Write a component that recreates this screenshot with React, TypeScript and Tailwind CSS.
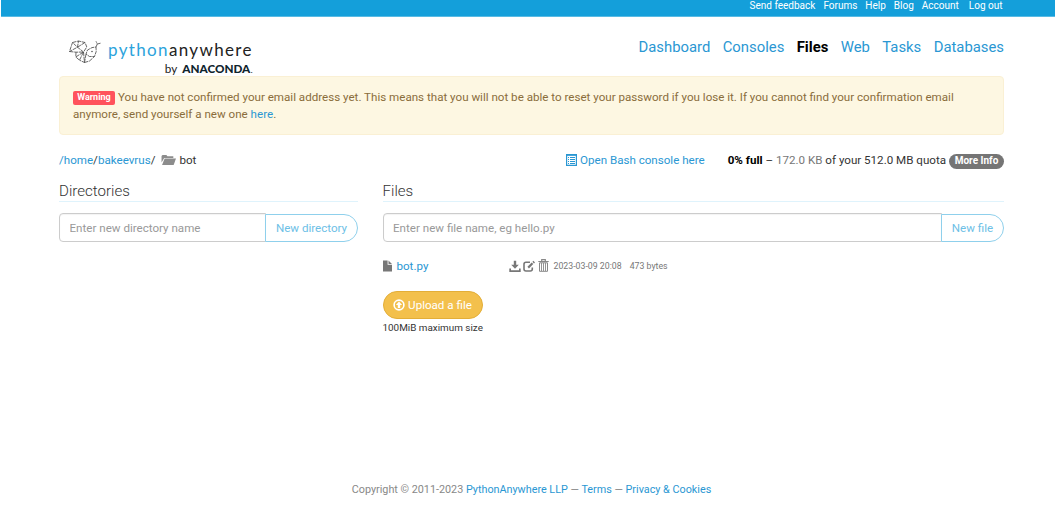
import React from "react";

const LINK = "text-[#2a97d3]";

function SnakeLogo() {
  return (
    <svg className="mt-[9px] h-[26px] w-[34px] shrink-0" viewBox="0 0 34 26" fill="none" stroke="#444" strokeWidth="0.8" strokeLinejoin="round" strokeDasharray="4 0.7">
      <path d="M4.5 3.5L10.5 2L17 3.5L18.8 8L15.5 13L9.5 8.2L4.5 3.5L1.5 12.5L9.5 8.2L10.5 2M9.5 8.2L17 3.5M1.5 12.5L8 13.2L15.5 13M8 13.2L7.8 18L15.5 13L11.5 21.2L7.8 18M15.5 13L16.5 23.5L11.5 21.2" />
      <path d="M16.5 23.5L21.5 22L26.5 17.5L28.2 12.5L28 8L24 8.6L19.5 11L18 15L21.5 17.5L26.5 17.5M18 15L16.5 23.5" />
      <path d="M28 8L29.3 5L28 2.3M29.3 5L32.5 4.2" />
      <circle cx="24" cy="12.5" r="0.7" fill="#333" stroke="none" />
    </svg>
  );
}

function Folder() {
  return (
    <svg className="ml-[6px] mr-[3px] h-[12px] w-[15px]" viewBox="0 0 14 12" preserveAspectRatio="none" fill="#8c8c8c">
      <path d="M0.5 8.5V2L1.4 1H5L6 2.2H11.5V4H3L0.5 8.5Z" />
      <path d="M3.4 4.6H14L11.8 11H1L3.4 4.6Z" />
    </svg>
  );
}

function ListIcon() {
  return (
    <svg className="mr-[3px] mb-px h-[12px] w-[11px]" viewBox="0 0 11 12">
      <path d="M0.6 0.6H10.4V11.4H0.6Z" fill="none" stroke="#2a97d3" strokeWidth="1.2" />
      <path d="M0.5 1.3H10.5M2 3.5H3M4 3.5H9M2 5.5H3M4 5.5H9M2 7.5H3M4 7.5H9M2 9.5H3M4 9.5H9" stroke="#2a97d3" strokeWidth="1" />
    </svg>
  );
}

function FileIcon() {
  return (
    <svg className="mr-[5px] mb-px h-[12px] w-[9px]" viewBox="0 0 9 12" fill="#777">
      <path d="M0 0.5H4.6V4.8H9V11.5H0ZM5.5 0.5L9 4H5.5Z" />
    </svg>
  );
}

function Download() {
  return (
    <svg className="h-[13px] w-[12px]" viewBox="0 0 12 13" fill="#777">
      <path d="M4.8 0.8H7.2V4.8H9.8L6 8.8L2.2 4.8H4.8ZM0.3 8.5H2V10.2H10V8.5H11.7V12H0.3Z" />
    </svg>
  );
}

function Edit() {
  return (
    <svg className="ml-[2px] h-[13px] w-[12px]" viewBox="0 0 12 13" fill="none" stroke="#777" strokeWidth="1.6">
      <path d="M7 2.3H3Q1 2.3 1 4.3V9Q1 11 3 11H7.3Q9.3 11 9.3 9V7.5" />
      <path d="M5.2 7.6L9.5 3.3" strokeWidth="2.2" />
      <path d="M10.2 2.6L11.2 1.6" strokeWidth="2.2" />
    </svg>
  );
}

function Trash() {
  return (
    <svg className="ml-[3px] mb-[2px] h-[13px] w-[11px]" viewBox="0 0 11 13" fill="none" stroke="#888">
      <path d="M0.3 2.5H10.7M3.7 2V0.7H7.3V2" strokeWidth="1.2" />
      <path d="M1.5 3.8V12.3H9.5V3.8Z" strokeWidth="1" />
      <path d="M3.5 4V12M5.5 4V12M7.5 4V12" strokeWidth="0.9" />
    </svg>
  );
}

function UploadIcon() {
  return (
    <svg className="mr-[3px] mb-px h-[12px] w-[12px]" viewBox="0 0 12 12" fill="none" stroke="#fff">
      <circle cx="6" cy="6" r="4.9" strokeWidth="1.6" />
      <path d="M6 2.4L9.1 6H7.2V9H4.8V6H2.9Z" fill="#fff" stroke="none" />
    </svg>
  );
}

function CreateForm({ placeholder, action, width }: { placeholder: string; action: string; width: string }) {
  return (
    <div className="mt-[11px] flex h-[29px] text-[11.6px]">
      <input placeholder={placeholder} className="h-[29px] min-w-0 flex-1 rounded-l-[4px] border border-[#ccc] bg-white px-[9.5px] text-[#555] shadow-[inset_0_1px_1px_rgba(0,0,0,0.05)] outline-none placeholder:text-[#999]" />
      <button className={`-ml-px mt-px h-[28px] shrink-0 rounded-r-full border border-[#8fd0ec] bg-white text-[#6dc0e6] ${width}`}>{action}</button>
    </div>
  );
}

export default function App() {
  return (
    <div className="flex h-[507px] w-[1056px] flex-col overflow-hidden bg-white text-[11.6px] leading-[16.5px] text-[#333]" style={{ fontFamily: "Roboto, sans-serif" }}>
      <div className="mr-px ml-px flex h-[17px] shrink-0 justify-end border-b border-[#58bbe4] bg-[#149fda] pr-[52.5px] text-[10px] leading-[11px] text-white">
        <span className="mr-[8px]">Send feedback</span>
        <span className="mr-[8px]">Forums</span>
        <span className="mr-[8px]">Help</span>
        <span className="mr-[8px]">Blog</span>
        <span className="mr-[10px]">Account</span>
        <span>Log out</span>
      </div>

      <div className="ml-[59px] flex w-[945px] flex-1 flex-col">
        <header className="flex h-[59px] shrink-0 justify-between">
          <div className="flex pt-[13px] pl-[9px]">
            <SnakeLogo />
            <div className="ml-[6px] flex w-[146px] flex-col pt-[8px]" style={{ fontFamily: "Lato, sans-serif" }}>
              <div className="h-[25px] whitespace-nowrap text-[17px] leading-[23px] tracking-[1.35px] text-[#222]">
                <span className="text-[#2ba3dc]">python</span>anywhere
              </div>
              <div className="flex items-baseline justify-end gap-[5px] pr-px text-[11.7px] leading-[15px] whitespace-nowrap text-[#222]">
                <span>by</span>
                <span className="font-black text-[#10242e]">ANACONDA<span className="font-light">.</span></span>
              </div>
            </div>
          </div>
          <nav className={`flex gap-[12.4px] pt-[20px] text-[14.85px] leading-[20px] ${LINK}`}>
            <span>Dashboard</span>
            <span>Consoles</span>
            <span className="font-bold text-black">Files</span>
            <span>Web</span>
            <span>Tasks</span>
            <span>Databases</span>
          </nav>
        </header>

        <div className="h-[59px] shrink-0 rounded-[4px] border border-[#faf0d4] bg-[#fdf7e2] px-[13px] pt-[12px] whitespace-nowrap text-[#8a6d3b]">
          <div className="flex h-[17px] items-center">
            <span className="mr-[3px] flex h-[14px] w-[42px] items-center justify-center rounded-[2px] bg-[#ff525c] text-[9px] font-bold text-white">Warning</span>
            You have not confirmed your email address yet. This means that you will not be able to reset your password if you lose it. If you cannot find your confirmation email
          </div>
          <div>anymore, send yourself a new one <span className={LINK}>here</span>.</div>
        </div>

        <div className="mt-[17px] flex h-[16px] shrink-0 items-center whitespace-nowrap">
          <span className={LINK}>/home</span>/<span className={LINK}>bakeevrus</span>/
          <Folder />
          <span>bot</span>
          <div className={`ml-auto flex items-center ${LINK}`}><ListIcon />Open Bash console here</div>
          <div className="ml-[23px]"><b className="text-black">0% full</b> – <span className="text-[#777]">172.0 KB</span> of your 512.0 MB quota</div>
          <span className="mt-[2px] ml-[3px] flex h-[15px] w-[55px] items-center justify-center rounded-full bg-[#757575] text-[10px] font-bold text-white">More Info</span>
        </div>

        <main className="mt-[13px] flex gap-[24.5px]">
          <section className="w-[299px]">
            <h2 className="h-[21px] border-b border-[#dff3fc] text-[15.1px] leading-[20px] font-light text-[#333]">Directories</h2>
            <CreateForm placeholder="Enter new directory name" action="New directory" width="w-[93px]" />
          </section>
          <section className="flex-1">
            <h2 className="h-[21px] border-b border-[#dff3fc] text-[15.1px] leading-[20px] font-light text-[#333]">Files</h2>
            <CreateForm placeholder="Enter new file name, eg hello.py" action="New file" width="w-[63px]" />
            <div className="mt-[16px] flex h-[17px] items-center">
              <div className={`flex w-[126px] items-center ${LINK}`}><FileIcon />bot.py</div>
              <Download />
              <Edit />
              <Trash />
              <span className="ml-[5px] text-[8.75px] text-[#777]">2023-03-09 20:08</span>
              <span className="ml-[8px] text-[8.75px] text-[#777]">473 bytes</span>
            </div>
            <button className="mt-[16px] flex h-[28px] w-[100px] items-center justify-center rounded-full border border-[#e3ae38] bg-[#f3c04c] text-white"><UploadIcon />Upload a file</button>
            <div className="mt-px text-[9.9px] leading-[15px]">100MiB maximum size</div>
          </section>
        </main>

        <footer className="mt-auto mb-[9px] text-center text-[10.8px] leading-[17px] text-[#888]">
          Copyright © 2011-2023 <span className={LINK}>PythonAnywhere LLP</span> — <span className={LINK}>Terms</span> — <span className={LINK}>Privacy &amp; Cookies</span>
        </footer>
      </div>
    </div>
  );
}
